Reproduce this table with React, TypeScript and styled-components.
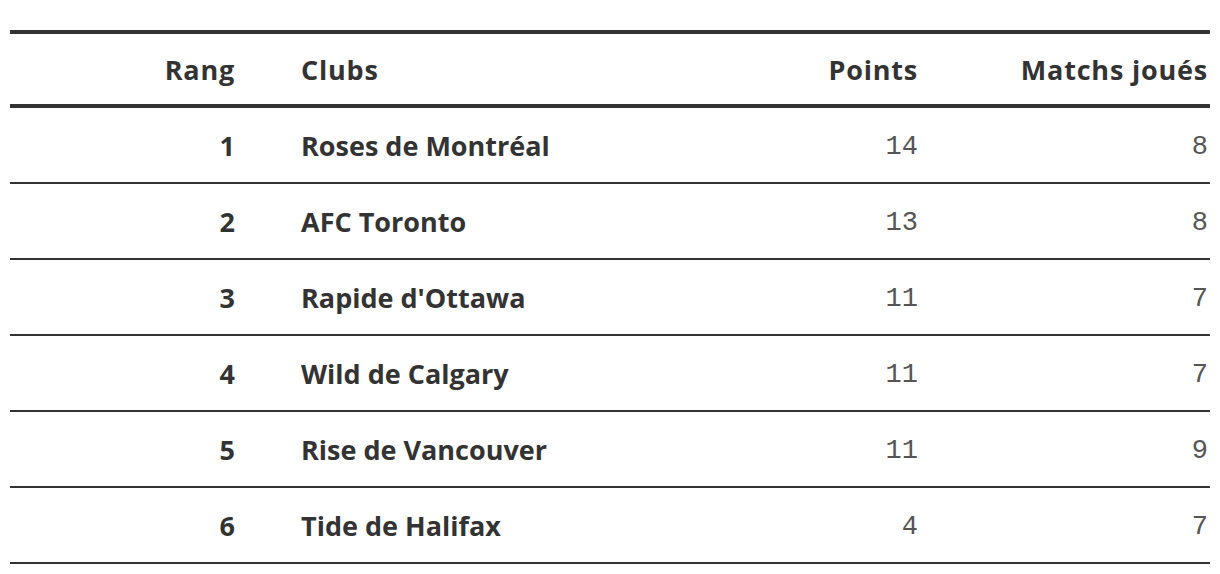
import React from 'react';
import styled, { createGlobalStyle } from 'styled-components';

const GlobalStyle = createGlobalStyle`
  body {
    margin: 0;
    background: #ffffff;
    color: #333333;
    font-family: 'Open Sans', 'Liberation Sans', sans-serif;
  }
`;

interface ClubRow {
  rank: number;
  club: string;
  points: number;
  played: number;
}

const rows: ClubRow[] = [
  { rank: 1, club: 'Roses de Montréal', points: 14, played: 8 },
  { rank: 2, club: 'AFC Toronto', points: 13, played: 8 },
  { rank: 3, club: "Rapide d'Ottawa", points: 11, played: 7 },
  { rank: 4, club: 'Wild de Calgary', points: 11, played: 7 },
  { rank: 5, club: 'Rise de Vancouver', points: 11, played: 9 },
  { rank: 6, club: 'Tide de Halifax', points: 4, played: 7 },
];

const Wrapper = styled.div`
  padding: 30px 10px 0;
`;

const Table = styled.table`
  width: 1200px;
  border-collapse: collapse;
  table-layout: fixed;
  border-top: 4px solid #333333;
`;

interface CellProps {
  $align?: 'left' | 'right';
  $mono?: boolean;
}

const HeadCell = styled.th<CellProps>`
  height: 70px;
  padding: 0;
  font-size: 27px;
  line-height: 1;
  font-weight: 700;
  letter-spacing: 0.8px;
  color: #333333;
  text-align: ${(p) => p.$align || 'left'};
  border-bottom: 4px solid #333333;
  vertical-align: middle;
`;

const Cell = styled.td<CellProps>`
  height: ${(p) => (p.$mono ? '69px' : '74px')};
  padding: ${(p) => (p.$mono ? '5px 0 0' : '0')};
  line-height: 1;
  font-size: 27px;
  font-weight: ${(p) => (p.$mono ? 400 : 700)};
  font-family: ${(p) =>
    p.$mono ? "'Liberation Mono', 'Courier New', monospace" : "'Open Sans', 'Liberation Sans', sans-serif"};
  color: ${(p) => (p.$mono ? '#555555' : '#333333')};
  text-align: ${(p) => p.$align || 'left'};
  border-bottom: 2px solid #333333;
  vertical-align: middle;
`;

const RankCol = styled.col`
  width: 225px;
`;

const ClubCol = styled.col`
  width: 483px;
`;

const PointsCol = styled.col`
  width: 200px;
`;

const PlayedCol = styled.col`
  width: 292px;
`;

const Gap = styled.span`
  display: inline-block;
  padding-left: 66px;
`;

const EndPad = styled.span`
  display: inline-block;
  padding-right: 2px;
`;

export default function App() {
  return (
    <>
      <GlobalStyle />
      <Wrapper>
        <Table>
          <colgroup>
            <RankCol />
            <ClubCol />
            <PointsCol />
            <PlayedCol />
          </colgroup>
          <thead>
            <tr>
              <HeadCell $align="right">Rang</HeadCell>
              <HeadCell>
                <Gap>Clubs</Gap>
              </HeadCell>
              <HeadCell $align="right">Points</HeadCell>
              <HeadCell $align="right">
                <EndPad>Matchs joués</EndPad>
              </HeadCell>
            </tr>
          </thead>
          <tbody>
            {rows.map((r) => (
              <tr key={r.rank}>
                <Cell $align="right">{r.rank}</Cell>
                <Cell>
                  <Gap>{r.club}</Gap>
                </Cell>
                <Cell $align="right" $mono>
                  {r.points}
                </Cell>
                <Cell $align="right" $mono>
                  <EndPad>{r.played}</EndPad>
                </Cell>
              </tr>
            ))}
          </tbody>
        </Table>
      </Wrapper>
    </>
  );
}
